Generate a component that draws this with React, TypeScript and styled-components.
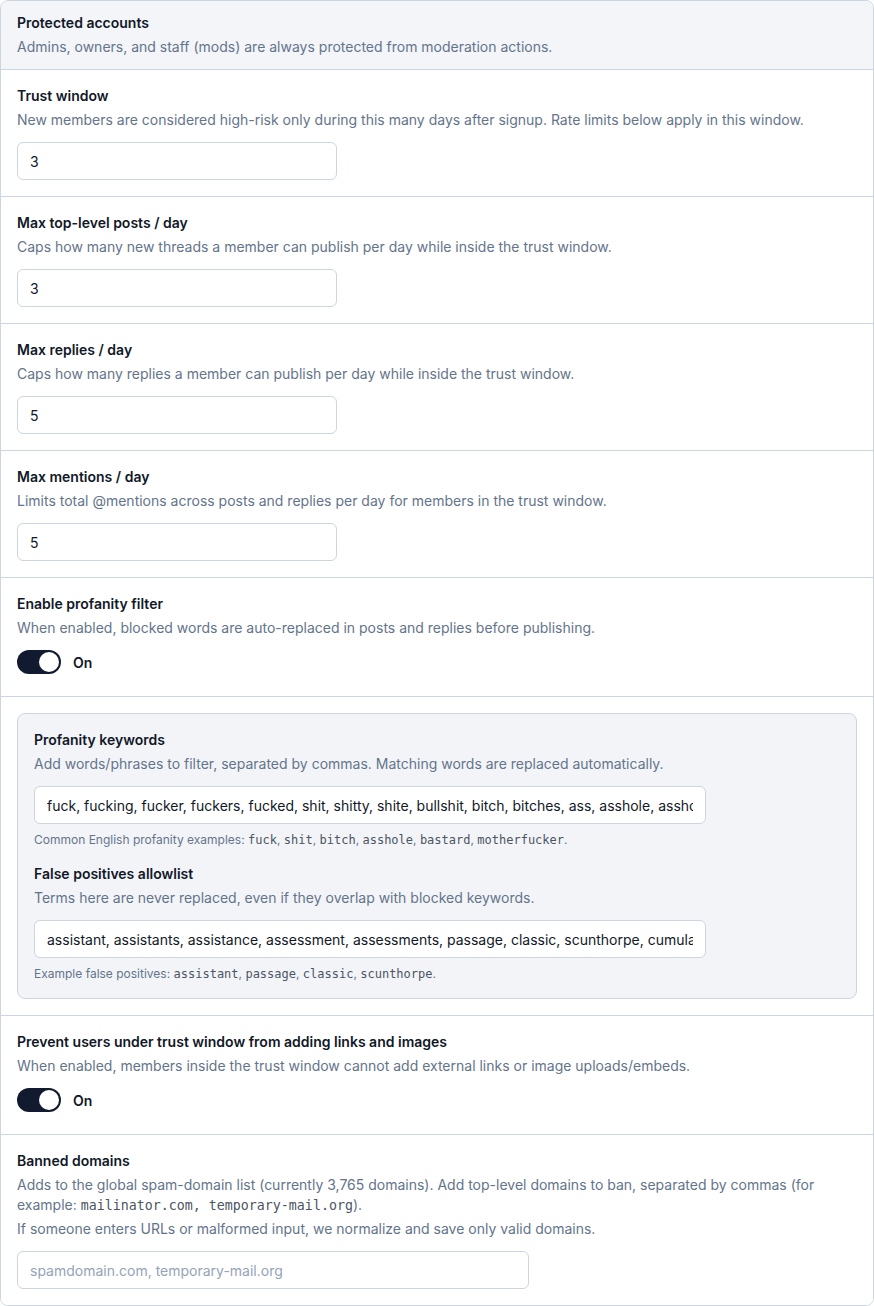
import React from "react";
import styled, { createGlobalStyle } from "styled-components";

const Global = createGlobalStyle`
  html, body { margin: 0; padding: 0; background: #ffffff; }
  body { font-family: Inter, "Noto Sans", sans-serif; -webkit-font-smoothing: antialiased; }
  * { box-sizing: border-box; }
`;

const Card = styled.div`
  width: 874px;
  border: 1px solid #cdd5e1;
  border-radius: 8px;
  overflow: hidden;
  background: #ffffff;
`;

const Section = styled.section<{ $tinted?: boolean; $compact?: boolean }>`
  display: flex;
  flex-direction: column;
  padding: ${(p) => (p.$compact ? "12px 16px" : "16px 16px")};
  background: ${(p) => (p.$tinted ? "#f3f5f9" : "#ffffff")};
  & + & { border-top: 1px solid #cdd5e1; }
`;

const Title = styled.div`
  font-size: 14px;
  line-height: 20px;
  font-weight: 600;
  color: #111827;
`;

const Desc = styled.div`
  margin-top: 4px;
  font-size: 14px;
  line-height: 20px;
  color: #64748b;
`;

const Code = styled.code<{ $size: number }>`
  font-family: "DejaVu Sans Mono", "Liberation Mono", monospace;
  font-size: ${(p) => p.$size}px;
  line-height: 1;
  color: #4b5563;
`;

const Input = styled.input<{ $w: number }>`
  margin-top: 12px;
  width: ${(p) => p.$w}px;
  height: 38px;
  padding: 0 12px;
  border: 1px solid #cdd5e1;
  border-radius: 6px;
  background: #ffffff;
  font-family: Inter, "Noto Sans", sans-serif;
  font-size: 14px;
  color: #111827;
  outline: none;
  &::placeholder { color: #94a3b8; }
`;

const ToggleRow = styled.div`
  display: flex;
  align-items: center;
  gap: 12px;
  margin-top: 12px;
  margin-bottom: 6px;
  height: 24px;
`;

const Switch = styled.span<{ $on: boolean }>`
  position: relative;
  width: 44px;
  height: 24px;
  border-radius: 12px;
  background: ${(p) => (p.$on ? "#111a2e" : "#cbd5e1")};
  flex-shrink: 0;
  &::after {
    content: "";
    position: absolute;
    top: 2px;
    left: ${(p) => (p.$on ? "22px" : "2px")};
    width: 20px;
    height: 20px;
    border-radius: 50%;
    background: #ffffff;
  }
`;

const ToggleLabel = styled.span`
  font-size: 14px;
  font-weight: 600;
  color: #111827;
`;

const SubPanel = styled.div`
  display: flex;
  flex-direction: column;
  gap: 16px;
  padding: 16px 16px;
  background: #f3f4f8;
  border: 1px solid #cdd5e1;
  border-radius: 8px;
`;

const Field = styled.div`
  display: flex;
  flex-direction: column;
`;

const Helper = styled.div`
  margin-top: 8px;
  font-size: 12px;
  line-height: 16px;
  color: #64748b;
`;

function Toggle({ on }: { on: boolean }) {
  return (
    <ToggleRow>
      <Switch $on={on} />
      <ToggleLabel>{on ? "On" : "Off"}</ToggleLabel>
    </ToggleRow>
  );
}

export default function App() {
  return (
    <>
      <Global />
      <Card>
        <Section $tinted $compact>
          <Title>Protected accounts</Title>
          <Desc>Admins, owners, and staff (mods) are always protected from moderation actions.</Desc>
        </Section>

        <Section>
          <Title>Trust window</Title>
          <Desc>New members are considered high-risk only during this many days after signup. Rate limits below apply in this window.</Desc>
          <Input $w={320} defaultValue="3" />
        </Section>

        <Section>
          <Title>Max top-level posts / day</Title>
          <Desc>Caps how many new threads a member can publish per day while inside the trust window.</Desc>
          <Input $w={320} defaultValue="3" />
        </Section>

        <Section>
          <Title>Max replies / day</Title>
          <Desc>Caps how many replies a member can publish per day while inside the trust window.</Desc>
          <Input $w={320} defaultValue="5" />
        </Section>

        <Section>
          <Title>Max mentions / day</Title>
          <Desc>Limits total @mentions across posts and replies per day for members in the trust window.</Desc>
          <Input $w={320} defaultValue="5" />
        </Section>

        <Section>
          <Title>Enable profanity filter</Title>
          <Desc>When enabled, blocked words are auto-replaced in posts and replies before publishing.</Desc>
          <Toggle on />
        </Section>

        <Section>
          <SubPanel>
            <Field>
              <Title>Profanity keywords</Title>
              <Desc>Add words/phrases to filter, separated by commas. Matching words are replaced automatically.</Desc>
              <Input
                $w={672}
                defaultValue="fuck, fucking, fucker, fuckers, fucked, shit, shitty, shite, bullshit, bitch, bitches, ass, asshole, assholes, bastard, motherfucker"
              />
              <Helper>
                Common English profanity examples: <Code $size={12}>fuck</Code>, <Code $size={12}>shit</Code>,{" "}
                <Code $size={12}>bitch</Code>, <Code $size={12}>asshole</Code>, <Code $size={12}>bastard</Code>,{" "}
                <Code $size={12}>motherfucker</Code>.
              </Helper>
            </Field>
            <Field>
              <Title>False positives allowlist</Title>
              <Desc>Terms here are never replaced, even if they overlap with blocked keywords.</Desc>
              <Input
                $w={672}
                defaultValue="assistant, assistants, assistance, assessment, assessments, passage, classic, scunthorpe, cumulative"
              />
              <Helper>
                Example false positives: <Code $size={12}>assistant</Code>, <Code $size={12}>passage</Code>,{" "}
                <Code $size={12}>classic</Code>, <Code $size={12}>scunthorpe</Code>.
              </Helper>
            </Field>
          </SubPanel>
        </Section>

        <Section>
          <Title>Prevent users under trust window from adding links and images</Title>
          <Desc>When enabled, members inside the trust window cannot add external links or image uploads/embeds.</Desc>
          <Toggle on />
        </Section>

        <Section>
          <Title>Banned domains</Title>
          <Desc>
            Adds to the global spam-domain list (currently 3,765 domains). Add top-level domains to ban, separated by commas (for
            example: <Code $size={13.3}>mailinator.com, temporary-mail.org</Code>).
          </Desc>
          <Desc>If someone enters URLs or malformed input, we normalize and save only valid domains.</Desc>
          <Input $w={512} placeholder="spamdomain.com, temporary-mail.org" />
        </Section>
      </Card>
    </>
  );
}
